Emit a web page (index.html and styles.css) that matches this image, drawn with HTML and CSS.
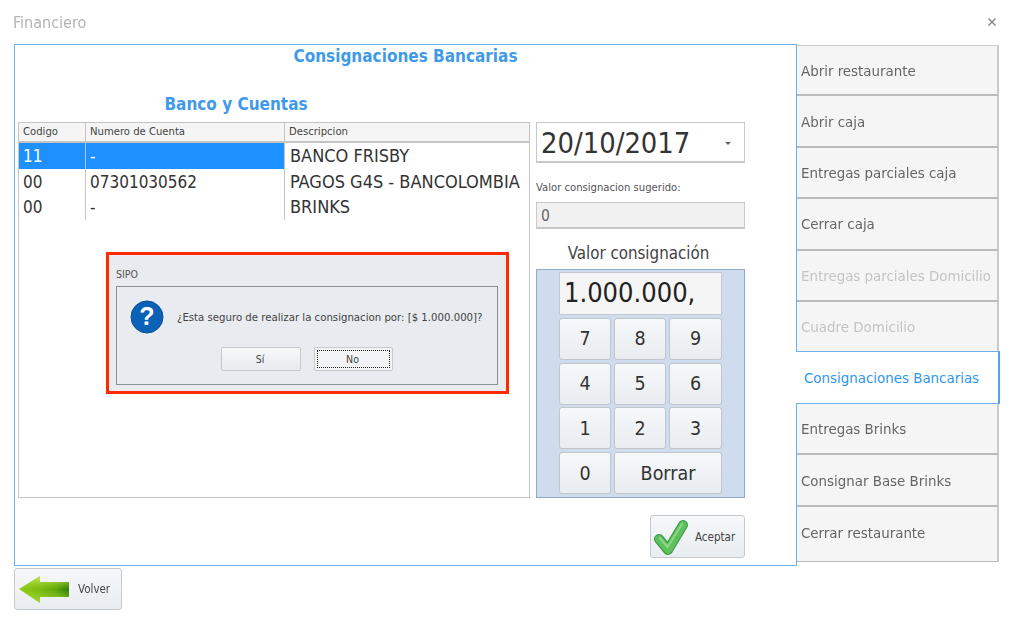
FILE: index.html
```html
<!DOCTYPE html>
<html lang="es">
<head>
<meta charset="utf-8">
<title>Financiero</title>
<link rel="stylesheet" href="styles.css">
</head>
<body>
<div class="page">
  <header class="topbar">
    <span class="window-title">Financiero</span>
    <svg class="close" width="10" height="10" viewBox="0 0 10 10"><path d="M1.5 1.5l7 7M8.5 1.5l-7 7" stroke="#8a8a8a" stroke-width="1.5" fill="none"/></svg>
  </header>
  <div class="workspace">
    <main class="panel">
      <h1 class="title">Consignaciones Bancarias</h1>
      <h2 class="subtitle">Banco y Cuentas</h2>
      <div class="body-row">
        <section class="grid">
          <div class="grid-row grid-head"><div>Codigo</div><div>Numero de Cuenta</div><div>Descripcion</div></div>
          <div class="grid-row grid-item selected"><div>11</div><div>-</div><div>BANCO FRISBY</div></div>
          <div class="grid-row grid-item"><div>00</div><div>07301030562</div><div>PAGOS G4S - BANCOLOMBIA</div></div>
          <div class="grid-row grid-item"><div>00</div><div>-</div><div>BRINKS</div></div>
        </section>
        <section class="side">
          <div class="date"><span>20/10/2017</span><i class="caret"></i></div>
          <label class="hint">Valor consignacion sugerido:</label>
          <div class="suggested">0</div>
          <div class="value-label">Valor consignación</div>
          <div class="keypad">
            <div class="display">1.000.000,</div>
            <button class="key">7</button><button class="key">8</button><button class="key">9</button>
            <button class="key">4</button><button class="key">5</button><button class="key">6</button>
            <button class="key">1</button><button class="key">2</button><button class="key">3</button>
            <button class="key">0</button><button class="key key-wide">Borrar</button>
          </div>
        </section>
      </div>
      <div class="actions">
        <button class="icon-btn accept">
          <svg width="36" height="36" viewBox="0 0 36 36">
            <path d="M6 20l9 11L30 6" fill="none" stroke="#3d9e48" stroke-width="10" stroke-linecap="round" stroke-linejoin="round"/>
            <path d="M6 20l9 11L30 6" fill="none" stroke="#5fc05f" stroke-width="7.500" stroke-linecap="round" stroke-linejoin="round"/>
            <path d="M7 19l7.500 9L29 5" fill="none" stroke="#8ed888" stroke-width="2" stroke-linecap="round" stroke-linejoin="round"/>
          </svg>
          <span>Aceptar</span>
        </button>
      </div>
      <div class="dialog">
        <div class="dialog-title">SIPO</div>
        <div class="dialog-box">
          <div class="dialog-msg">
            <svg width="34" height="34" viewBox="0 0 34 34"><circle cx="17" cy="17" r="16" fill="#0a62b8" stroke="#0d4f95"/><text x="17" y="25" text-anchor="middle" class="qmark">?</text></svg>
            <span class="dialog-text">¿Esta seguro de realizar la consignacion por: [$ 1.000.000]?</span>
          </div>
          <div class="dialog-btns">
            <button class="dlg-btn">Sí</button>
            <button class="dlg-btn focus"><span>No</span></button>
          </div>
        </div>
      </div>
    </main>
    <nav class="tabs">
      <a class="tab">Abrir restaurante</a>
      <a class="tab">Abrir caja</a>
      <a class="tab">Entregas parciales caja</a>
      <a class="tab">Cerrar caja</a>
      <a class="tab disabled">Entregas parciales Domicilio</a>
      <a class="tab disabled pre-active">Cuadre Domicilio</a>
      <a class="tab active">Consignaciones Bancarias</a>
      <a class="tab">Entregas Brinks</a>
      <a class="tab">Consignar Base Brinks</a>
      <a class="tab last">Cerrar restaurante</a>
    </nav>
  </div>
  <div class="footer">
    <button class="icon-btn back">
      <svg width="52" height="30" viewBox="0 0 52 30">
        <defs>
          <linearGradient id="arr" x1="0" y1="0" x2="1" y2="0"><stop offset="0" stop-color="#8ccb14"/><stop offset=".4" stop-color="#7dbb12"/><stop offset=".75" stop-color="#5ea50c"/><stop offset="1" stop-color="#2f7d08"/></linearGradient>
          <linearGradient id="arrtop" x1="0" y1="0" x2="0" y2="1"><stop offset="0" stop-color="#d4ef70" stop-opacity=".9"/><stop offset=".5" stop-color="#a9dc30" stop-opacity="0"/><stop offset="1" stop-color="#b9e24a" stop-opacity=".7"/></linearGradient>
        </defs>
        <path d="M0 15L21 2v6h29v15H21v6z" fill="url(#arr)"/>
        <path d="M0 15L21 2v6h29v15H21v6z" fill="url(#arrtop)"/>
      </svg>
      <span>Volver</span>
    </button>
  </div>
</div>
</body>
</html>
```
FILE: styles.css
```css
* { box-sizing: border-box; }
html, body { margin: 0; padding: 0; background: #fff; }
body { font-family: "DejaVu Sans Condensed", "DejaVu Sans", sans-serif; color: #333; width: 1016px; height: 627px; overflow: hidden; }
button { font-family: inherit; padding: 0; margin: 0; }
.page { filter: blur(0.35px); }

.topbar { height: 44px; display: flex; align-items: center; justify-content: space-between; padding: 0 19px 0 13px; }
.window-title { font-size: 16px; line-height: 20px; padding-top: 2px; color: #b4b4b4; }
.close { display: block; }

.workspace { display: flex; align-items: flex-start; }
.panel { position: relative; margin-left: 14px; width: 783px; height: 522px; border: 1px solid #6cb0ee; background: #fff; }
.title { margin: 0; height: 22px; font-size: 17px; line-height: 22px; font-weight: 700; color: #3f9bea; text-align: center; }
.subtitle { margin: 26px 0 0; height: 22px; width: 442px; font-size: 17px; line-height: 22px; font-weight: 700; color: #3f9bea; text-align: center; }
.body-row { display: flex; gap: 6px; margin-top: 7px; padding-left: 3px; height: 376px; }

.grid { width: 512px; height: 376px; border: 1px solid #c4c4c4; }
.grid-row { display: grid; grid-template-columns: 67px 199px 1fr; }
.grid-head { height: 21px; background: #f5f5f5; border-bottom: 2px solid #c4c4c4; font-size: 11.200px; line-height: 18px; color: #444; margin-top: -1px; border-top: 1px solid #c4c4c4; }
.grid-head > div { padding-left: 4px; border-right: 1px solid #c4c4c4; }
.grid-head > div:last-child { border-right: 0; }
.grid-item { height: 25.700px; font-size: 17px; line-height: 26px; color: #333; }
.grid-item > div { padding-left: 4px; border-right: 1px solid #c4c4c4; white-space: nowrap; }
.grid-item > div:last-child { border-right: 0; padding-left: 5px; font-size: 18px; }
.selected > div:nth-child(-n+2) { background: #1e90ff; color: #fff; }
.selected > div:first-child { border-right-color: #b8c8d8; }

.side { width: 209px; display: flex; flex-direction: column; }
.date { height: 41px; border: 1px solid #c8c8c8; border-bottom-width: 2px; display: flex; align-items: center; justify-content: space-between; padding: 2px 13px 0 4px; font-size: 28.800px; color: #333; }
.caret { width: 0; height: 0; border: 3px solid transparent; border-top-color: #666; border-bottom: 0; }
.hint { margin-top: 18px; height: 14px; font-size: 11.200px; line-height: 14px; color: #555; }
.suggested { margin-top: 7px; height: 27px; background: #f0f0f0; border: 1px solid #c8c8c8; border-bottom-width: 2px; padding-left: 4px; font-size: 15.500px; line-height: 26px; color: #666; }
.value-label { margin-top: 12px; height: 24px; padding-right: 4px; font-size: 16.800px; line-height: 24px; text-align: center; color: #444; }
.keypad { margin-top: 4px; height: 229px; background: #cedcee; border: 1px solid #8fabca; padding: 2px 22px 3px; display: grid; grid-template-columns: 52px 52px 53px; grid-template-rows: 43px repeat(4, 42px); column-gap: 3px; align-content: space-between; }
.display { grid-column: 1 / -1; background: #f5f5f5; border: 1px solid #c4c9d0; padding-left: 4px; font-size: 27px; line-height: 40px; color: #222; }
.key { background: linear-gradient(#f6f8fa, #e9ecf0); border: 1px solid #c2c6cb; border-radius: 3px; font-size: 19.500px; color: #333; }
.key-wide { grid-column: span 2; }

.actions { display: flex; justify-content: flex-end; margin-top: 17px; padding-right: 51px; }
.icon-btn { display: flex; align-items: center; background: linear-gradient(#f6f8fa, #e9ecf0); border: 1px solid #c6c9cd; border-radius: 3px; font-size: 11.500px; color: #444; }
.accept { width: 95px; height: 43px; padding-left: 2px; gap: 6px; }
.back { width: 108px; height: 42px; padding-left: 4px; gap: 7px; }

.footer { padding: 2px 0 0 14px; }

.dialog { position: absolute; left: 91px; top: 207px; width: 403px; height: 142px; border: 3px solid #ff2a00; background: #e8ebef; padding: 0 8px 0 7px; }
.dialog-title { height: 31px; padding-top: 11px; font-size: 10.500px; line-height: 16px; color: #555; }
.dialog-box { height: 99px; border: 1px solid #8c9096; display: flex; flex-direction: column; }
.dialog-msg { display: flex; align-items: center; gap: 13px; height: 60px; padding: 0 0 0 13px; font-size: 11.300px; color: #444; white-space: nowrap; }
.dialog-msg svg { flex: none; }
.dialog-text { padding-top: 1px; }
.qmark { font-family: "Liberation Sans", sans-serif; font-size: 25px; font-weight: 700; fill: #fff; }
.dialog-btns { display: flex; gap: 13px; padding-left: 104px; }
.dlg-btn { width: 80px; height: 24px; background: linear-gradient(#f6f8fa, #e8ebef); border: 1px solid #c4c7cb; border-radius: 2px; font-size: 10.500px; line-height: 22px; padding-right: 2px; color: #444; }
.dlg-btn.focus { width: 79px; background: #f2f4f6; padding: 2px; }
.dlg-btn.focus span { display: block; height: 100%; line-height: 17px; padding-right: 2px; border: 1px dotted #222; }

.tabs { margin-top: 1px; width: 202px; height: 516px; display: flex; flex-direction: column; }
.tab { height: 51.400px; flex: none; display: flex; align-items: center; padding: 1px 0 0 4px; background: #f5f5f5; border-right: 2px solid #cbcbcb; border-bottom: 2px solid #bbb; font-size: 14.900px; color: #666; white-space: nowrap; }
.tab:first-child { border-top: 1px solid #ccc; }
.tab.disabled { color: #c4c4c4; }
.tab.pre-active { height: 49px; border-bottom: 0; padding-top: 2px; }
.tab.active { position: relative; height: 53px; width: 204px; margin-left: -1px; padding-left: 8px; padding-top: 2px; background: #fff; border: 1px solid #6cb0ee; border-left: 0; border-right: 2px solid #4ea4ee; color: #2f96ee; }
.tab.last { height: 55px; border-bottom-width: 1px; padding-top: 0; padding-bottom: 1px; }
```
